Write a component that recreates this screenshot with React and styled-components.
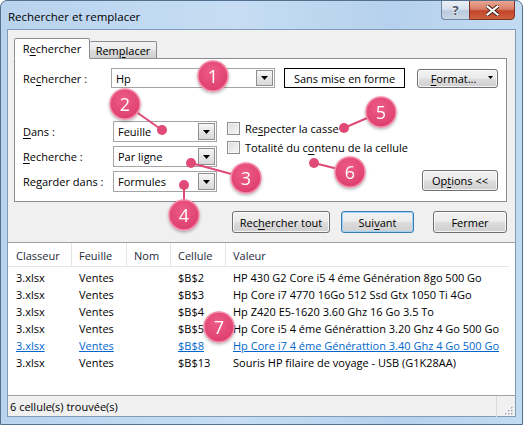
import React from "react";
import styled, { createGlobalStyle } from "styled-components";

const GlobalStyle = createGlobalStyle`
  html, body { margin: 0; padding: 0; background: #ffffff; }
  body {
    font-family: "Open Sans", "Noto Sans", sans-serif;
    font-size: 11px;
    color: #000;
  }
`;

export default function App() {
	return (
		<>
			<GlobalStyle />
			<Window>
				<TitleBar>
					<Title>Rechercher et remplacer</Title>
					<Controls>
						<HelpBtn>?</HelpBtn>
						<CloseBtn>
							<svg width="13" height="11" viewBox="0 0 13 11">
								<path
									d="M1.5 1.5l10 8M11.5 1.5l-10 8"
									stroke="#3a1d12"
									strokeWidth="4"
									strokeLinecap="square"
								/>
								<path
									d="M1.5 1.5l10 8M11.5 1.5l-10 8"
									stroke="#ffffff"
									strokeWidth="2.2"
									strokeLinecap="square"
								/>
							</svg>
						</CloseBtn>
					</Controls>
				</TitleBar>

				<Client>
					<TabArea>
						<TabStrip>
							<Tab $active>
								R<U>e</U>chercher
							</Tab>
							<Tab>
								Rem<U>p</U>lacer
							</Tab>
						</TabStrip>
						<Panel>
							<Row>
								<Label $w={88}>
									Re<U>c</U>hercher :
								</Label>
								<Combo $w={164} $h={20}>
									<ComboText>Hp</ComboText>
									<DropBtn>
										<Caret />
									</DropBtn>
								</Combo>
								<Preview>Sans mise en forme</Preview>
								<Button $w={81} $h={19} $ml={12}>
									<BtnInner>
										<span>
											<U>F</U>ormat...
										</span>
										<SmallCaret>
											<svg width="5" height="3" viewBox="0 0 5 3">
												<path d="M0 0h5L2.5 3z" fill="#000" />
											</svg>
										</SmallCaret>
									</BtnInner>
								</Button>
							</Row>

							<Options>
								<SelectCol>
									<Row>
										<Label $w={90}>
											<U>D</U>ans :
										</Label>
										<Combo $w={104} $h={21}>
											<ComboText>Feuille</ComboText>
											<DropBtn>
												<Caret />
											</DropBtn>
										</Combo>
									</Row>
									<Row>
										<Label $w={90}>
											<U>R</U>echerche :
										</Label>
										<Combo $w={104} $h={21}>
											<ComboText>Par ligne</ComboText>
											<DropBtn>
												<Caret />
											</DropBtn>
										</Combo>
									</Row>
									<Row>
										<Label $w={90}>
											Re<U>g</U>arder dans :
										</Label>
										<Combo $w={104} $h={21}>
											<ComboText>Formules</ComboText>
											<DropBtn>
												<Caret />
											</DropBtn>
										</Combo>
									</Row>
								</SelectCol>
								<CheckCol>
									<CheckRow>
										<Box />
										<span>
											Re<U>s</U>pecter la casse
										</span>
									</CheckRow>
									<CheckRow>
										<Box />
										<span>
											Totalité du c<U>o</U>ntenu de la cellule
										</span>
									</CheckRow>
								</CheckCol>
								<OptionsBtn $w={76} $h={21}>
									Op<U>t</U>ions &lt;&lt;
								</OptionsBtn>
							</Options>
						</Panel>
					</TabArea>

					<ButtonRow>
						<Button $w={98} $h={22}>
							Rec<U>h</U>ercher tout
						</Button>
						<Button $w={73} $h={22} $ml={11} $focus>
							Sui<U>v</U>ant
						</Button>
						<Button $w={74} $h={22} $ml={19}>
							Fermer
						</Button>
					</ButtonRow>

					<List>
						<HeaderRow>
							{["Classeur", "Feuille", "Nom", "Cellule", "Valeur"].map((h) => (
								<HeadCell key={h}>{h}</HeadCell>
							))}
						</HeaderRow>
						<Rows>
							{results.map((r, i) => (
								<DataRow key={i} $link={r.link}>
									<Cell $first>{r.file}</Cell>
									<Cell>{r.sheet}</Cell>
									<Cell></Cell>
									<Cell>{r.cell}</Cell>
									<Cell>{r.value}</Cell>
								</DataRow>
							))}
						</Rows>
					</List>

					<StatusBar>
						<StatusText>6 cellule(s) trouvée(s)</StatusText>
						<Grip>
							<svg width="10" height="10" viewBox="0 0 10 10">
								{[
									[8, 2],
									[8, 5],
									[5, 5],
									[8, 8],
									[5, 8],
									[2, 8],
								].map(([x, y], i) => (
									<g key={i}>
										<rect x={x} y={y} width="1.5" height="1.5" fill="#ffffff" />
										<rect x={x - 1} y={y - 1} width="1.5" height="1.5" fill="#a0a6ad" />
									</g>
								))}
							</svg>
						</Grip>
					</StatusBar>
				</Client>

				<Callouts width="523" height="425" viewBox="0 0 523 425">
					<defs>
						<radialGradient id="pink" cx="45%" cy="35%" r="70%">
							<stop offset="0%" stopColor="#ee5c86" />
							<stop offset="100%" stopColor="#dc3c6c" />
						</radialGradient>
						<filter id="sh" x="-50%" y="-50%" width="200%" height="200%">
							<feDropShadow dx="0" dy="1.5" stdDeviation="1.8" floodColor="#000" floodOpacity="0.3" />
						</filter>
					</defs>
					{leaders.map((l, i) => (
						<g key={i}>
							<line x1={l[0]} y1={l[1]} x2={l[2]} y2={l[3]} stroke="#e04a76" strokeWidth="2" />
							<circle cx={l[2]} cy={l[3]} r="5" fill="#e04a76" />
						</g>
					))}
					{bubbles.map((b) => (
						<g key={b.n} filter="url(#sh)">
							<circle cx={b.x} cy={b.y} r="15" fill="url(#pink)" stroke="#f48aa9" strokeWidth="1.5" />
							<text
								x={b.x}
								y={b.y + 6.5}
								textAnchor="middle"
								fontFamily="Open Sans, sans-serif"
								fontSize="18"
								fill="#ffffff"
							>
								{b.n}
							</text>
						</g>
					))}
				</Callouts>
			</Window>
		</>
	);
}

const results = [
	{ file: "3.xlsx", sheet: "Ventes", cell: "$B$2", value: "HP 430 G2 Core i5 4 éme Génération 8go 500 Go" },
	{ file: "3.xlsx", sheet: "Ventes", cell: "$B$3", value: "Hp Core i7 4770 16Go 512 Ssd Gtx 1050 Ti 4Go" },
	{ file: "3.xlsx", sheet: "Ventes", cell: "$B$4", value: "Hp Z420 E5-1620 3.60 Ghz 16 Go 3.5 To" },
	{ file: "3.xlsx", sheet: "Ventes", cell: "$B$5", value: "Hp Core i5 4 éme Générattion 3.20 Ghz 4 Go 500 Go" },
	{ file: "3.xlsx", sheet: "Ventes", cell: "$B$8", value: "Hp Core i7 4 éme Générattion 3.40 Ghz 4 Go 500 Go", link: true },
	{ file: "3.xlsx", sheet: "Ventes", cell: "$B$13", value: "Souris HP filaire de voyage - USB (G1K28AA)" },
];

// leader lines: from bubble centre to the dot
const leaders = [
	[125, 104, 162, 130],
	[246, 178, 191, 163],
	[184, 215, 184, 185],
	[381, 112, 344, 128],
	[350, 172, 314, 163],
];

const bubbles = [
	{ n: 1, x: 213, y: 76 },
	{ n: 2, x: 125, y: 104 },
	{ n: 3, x: 246, y: 178 },
	{ n: 4, x: 184, y: 215 },
	{ n: 5, x: 381, y: 112 },
	{ n: 6, x: 350, y: 172 },
	{ n: 7, x: 219, y: 327 },
];

const Caret = () => (
	<svg width="7" height="4" viewBox="0 0 7 4">
		<path d="M0 0h7L3.5 4z" fill="#000" />
	</svg>
);

const Window = styled.div`
	position: relative;
	width: 523px;
	height: 425px;
	box-sizing: border-box;
	border: 1px solid #52718f;
	border-radius: 7px 7px 0 0;
	background: linear-gradient(90deg, #b9d3ee 0%, #c6ddf3 45%, #b6d1ed 75%, #c3dbf2 100%);
	padding: 0 6px 7px 6px;
	display: flex;
	flex-direction: column;
	overflow: hidden;
`;
const TitleBar = styled.div`
	height: 28px;
	display: flex;
	align-items: center;
	justify-content: space-between;
	flex-shrink: 0;
`;
const Title = styled.div`
	font-size: 11.5px;
	padding-left: 1px;
	padding-top: 2px;
	color: #000;
`;
const Controls = styled.div`
	align-self: flex-start;
	display: flex;
	margin-top: -1px;
	margin-right: 1px;
`;
const HelpBtn = styled.div`
	width: 28px;
	height: 20px;
	box-sizing: border-box;
	border: 1px solid #6d86a3;
	border-right: none;
	border-radius: 0 0 0 4px;
	background: linear-gradient(180deg, #e9eff6 0%, #d7e2ee 45%, #b9cadd 55%, #c9d7e6 100%);
	display: flex;
	align-items: center;
	justify-content: center;
	font-weight: 700;
	font-size: 13px;
	color: #4a5563;
	text-shadow: 0 0 2px #fff, 0 0 2px #fff;
`;
const CloseBtn = styled.div`
	width: 46px;
	height: 20px;
	box-sizing: border-box;
	border: 1px solid #7e3424;
	border-radius: 0 0 4px 0;
	background: linear-gradient(180deg, #e7a692 0%, #d98068 45%, #c3442b 55%, #d0603f 100%);
	display: flex;
	align-items: center;
	justify-content: center;
`;
const Client = styled.div`
	flex: 1;
	background: #f0f0f0;
	border: 1px solid #7f9db9;
	display: flex;
	flex-direction: column;
	min-height: 0;
`;
const TabArea = styled.div`
	margin: 8px 8px 0 6px;
`;
const TabStrip = styled.div`
	display: flex;
	align-items: flex-end;
	height: 21px;
	position: relative;
	z-index: 1;
	margin-bottom: -1px;
	padding-left: 0;
`;
const Tab = styled.div`
	box-sizing: border-box;
	height: ${(p) => (p.$active ? 21 : 18)}px;
	width: ${(p) => (p.$active ? 76 : 67)}px;
	border: 1px solid #898c95;
	border-bottom: ${(p) => (p.$active ? "1px solid #fff" : "1px solid #898c95")};
	border-left: ${(p) => (p.$active ? "1px solid #898c95" : "none")};
	border-radius: 2px 2px 0 0;
	background: ${(p) => (p.$active ? "#ffffff" : "linear-gradient(180deg, #f2f2f2 0%, #ebebeb 50%, #dddddd 51%, #cfcfcf 100%)")};
	display: flex;
	align-items: center;
	justify-content: center;
	padding-top: ${(p) => (p.$active ? 0 : 1)}px;
`;
const Panel = styled.div`
	box-sizing: border-box;
	height: 144px;
	background: #ffffff;
	border: 1px solid #898c95;
	padding: 9px 8px 8px 8px;
	display: flex;
	flex-direction: column;
`;
const Row = styled.div`
	display: flex;
	align-items: center;
`;
const Label = styled.div`
	width: ${(p) => p.$w}px;
	flex-shrink: 0;
`;
const U = styled.span`
	text-decoration: underline;
	text-underline-offset: 2px;
`;
const Combo = styled.div`
	box-sizing: border-box;
	width: ${(p) => p.$w}px;
	height: ${(p) => p.$h}px;
	border: 1px solid #a5a5a5;
	background: #fff;
	padding: 1px;
	display: flex;
`;
const ComboText = styled.div`
	flex: 1;
	display: flex;
	align-items: center;
	padding-left: 3px;
`;
const DropBtn = styled.div`
	box-sizing: border-box;
	width: 17px;
	border: 1px solid #8e8f8f;
	background: linear-gradient(180deg, #f7f7f7 0%, #e6e6e6 50%, #d9d9d9 100%);
	display: flex;
	align-items: center;
	justify-content: center;
`;
const Preview = styled.div`
	box-sizing: border-box;
	width: 121px;
	height: 20px;
	margin-left: 9px;
	border: 1px solid #000;
	display: flex;
	align-items: center;
	justify-content: center;
`;
const Button = styled.button`
	box-sizing: border-box;
	width: ${(p) => p.$w}px;
	height: ${(p) => p.$h}px;
	margin-left: ${(p) => p.$ml || 0}px;
	padding: 0;
	font: inherit;
	color: #000;
	border: 1px solid ${(p) => (p.$focus ? "#3c7fb1" : "#707070")};
	border-radius: 3px;
	background: linear-gradient(180deg, #f2f2f2 0%, #ebebeb 49%, #dddddd 51%, #cfcfcf 100%);
	box-shadow: inset 0 0 0 1px ${(p) => (p.$focus ? "#9bd4f5" : "rgba(255,255,255,0.75)")};
	flex-shrink: 0;
`;
const BtnInner = styled.span`
	display: flex;
	align-items: center;
	justify-content: center;
	position: relative;
	padding-right: 8px;
`;
const SmallCaret = styled.span`
	position: absolute;
	right: 4px;
	top: 50%;
	margin-top: -2px;
	display: flex;
`;
const Options = styled.div`
	display: flex;
	align-items: flex-end;
	margin-top: 33px;
`;
const SelectCol = styled.div`
	display: flex;
	flex-direction: column;
	gap: 4px;
`;
const CheckCol = styled.div`
	align-self: flex-start;
	display: flex;
	flex-direction: column;
	gap: 5px;
	margin-left: 10px;
`;
const CheckRow = styled.div`
	height: 14px;
	display: flex;
	align-items: center;
	gap: 5px;
`;
const Box = styled.div`
	box-sizing: border-box;
	width: 13px;
	height: 13px;
	border: 1px solid #8f8f8f;
	background: linear-gradient(135deg, #dcdcdc 0%, #f6f6f6 100%);
	box-shadow: inset 0 0 0 1px #f4f4f4;
`;
const OptionsBtn = styled(Button)`
	margin-left: auto;
	margin-bottom: 1px;
`;
const ButtonRow = styled.div`
	display: flex;
	justify-content: flex-end;
	margin: 9px 8px 9px 0;
`;
const List = styled.div`
	flex: 1;
	background: #ffffff;
	border-top: 1px solid #a0a0a0;
	display: flex;
	flex-direction: column;
`;
const cols = "64px 55px 44px 55px 1fr";
const HeaderRow = styled.div`
	display: grid;
	grid-template-columns: ${cols};
	height: 23px;
	border-bottom: 1px solid #e5e5e5;
	margin-right: 6px;
`;
const HeadCell = styled.div`
	display: flex;
	align-items: center;
	padding-left: 7px;
	padding-top: 1px;
	border-right: 1px solid #e5e5e5;
	color: #1e2a3a;
	&:first-child {
		padding-left: 8px;
	}
	&:last-child {
		border-right: none;
	}
`;
const Rows = styled.div`
	padding-top: 2px;
`;
const DataRow = styled.div`
	display: grid;
	grid-template-columns: ${cols};
	height: 17px;
	align-items: center;
	color: ${(p) => (p.$link ? "#0066cc" : "#000")};
	text-decoration: ${(p) => (p.$link ? "underline" : "none")};
`;
const Cell = styled.div`
	padding-left: ${(p) => (p.$first ? 8 : 7)}px;
	white-space: nowrap;
`;
const StatusBar = styled.div`
	height: 20px;
	border-top: 1px solid #a0a0a0;
	background: #f0f0f0;
	display: flex;
	align-items: center;
`;
const StatusText = styled.div`
	flex: 1;
	padding-left: 2px;
	padding-top: 1px;
`;
const Grip = styled.div`
	width: 17px;
	height: 100%;
	border-left: 1px solid #dadada;
	display: flex;
	align-items: flex-end;
	justify-content: flex-end;
	padding: 0 1px 1px 0;
`;
const Callouts = styled.svg`
	position: absolute;
	top: -1px;
	left: -1px;
	pointer-events: none;
`;
